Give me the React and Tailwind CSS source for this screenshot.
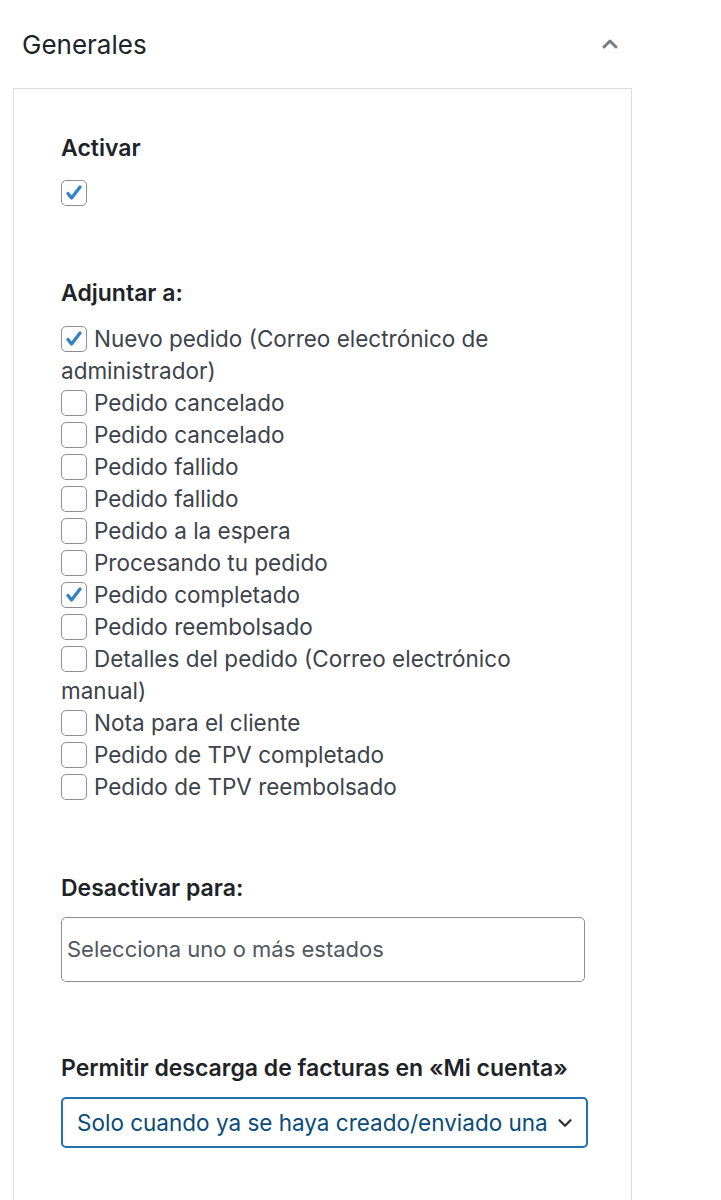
import { ChevronUp, ChevronDown } from "lucide-react";

const options = [
  { label: "Nuevo pedido (Correo electrónico de administrador)", checked: true },
  { label: "Pedido cancelado" },
  { label: "Pedido cancelado" },
  { label: "Pedido fallido" },
  { label: "Pedido fallido" },
  { label: "Pedido a la espera" },
  { label: "Procesando tu pedido" },
  { label: "Pedido completado", checked: true },
  { label: "Pedido reembolsado" },
  { label: "Detalles del pedido (Correo electrónico manual)" },
  { label: "Nota para el cliente" },
  { label: "Pedido de TPV completado" },
  { label: "Pedido de TPV reembolsado" },
];

const Box = ({ checked }) => (
  <span className="inline-flex items-center justify-center w-[26px] h-[26px] mr-[7px] align-middle -mt-[4px] rounded-[5px] border border-[#8c8f94] bg-white">
    {checked && (
      <svg viewBox="0 0 20 20" className="w-[22px] h-[22px]">
        <path d="M4.5 10.5l3.3 4L15.5 4.5" fill="none" stroke="#3582c4" strokeWidth="3" strokeLinecap="round" strokeLinejoin="round" />
      </svg>
    )}
  </span>
);

const Label = ({ children, className = "" }) => (
  <div className={`text-[23px] leading-[28px] font-semibold text-[#1d2327] ${className}`}>{children}</div>
);

export default function App() {
  return (
    <div className="min-h-[1200px] bg-white" style={{ fontFamily: "Inter, 'Noto Sans', sans-serif" }}>
      <div className="flex items-center justify-between pl-[22px] pr-[99px] h-[88px]">
        <h2 className="text-[26px] text-[#1d2327] font-normal">Generales</h2>
        <ChevronUp className="w-[24px] h-[24px] text-[#787c82]" strokeWidth={3} />
      </div>
      <div className="ml-[13px] w-[619px] min-h-[1112px] border border-[#dcdcde] border-b-0 pl-[47px] pr-[46px] pt-[45px]">
        <Label>Activar</Label>
        <div className="mt-[19px] h-[26px]">
          <Box checked />
        </div>

        <Label className="mt-[72px]">Adjuntar a:</Label>
        <div className="mt-[16px] text-[22.5px] leading-[32px] text-[#3c434a]">
          {options.map((o, i) => (
            <label key={i} className="block">
              <Box checked={o.checked} />
              {o.label}
            </label>
          ))}
        </div>

        <Label className="mt-[71px]">Desactivar para:</Label>
        <div className="mt-[15px] w-[524px] h-[65px] rounded-[5px] border border-[#8c8f94] flex items-center pl-[5px] text-[22px] text-[#50575e]">
          Selecciona uno o más estados
        </div>

        <Label className="mt-[72px]">Permitir descarga de facturas en «Mi cuenta»</Label>
        <div className="mt-[15px] w-[527px] h-[51px] rounded-[5px] border-2 border-[#2271b1] flex items-center justify-between pl-[14px] pr-[10px] text-[22.5px] text-[#0a4b78]">
          <span className="whitespace-nowrap">Solo cuando ya se haya creado/enviado una</span>
          <ChevronDown className="w-[22px] h-[22px] text-[#2c3338] shrink-0" strokeWidth={2.5} />
        </div>
      </div>
    </div>
  );
}
